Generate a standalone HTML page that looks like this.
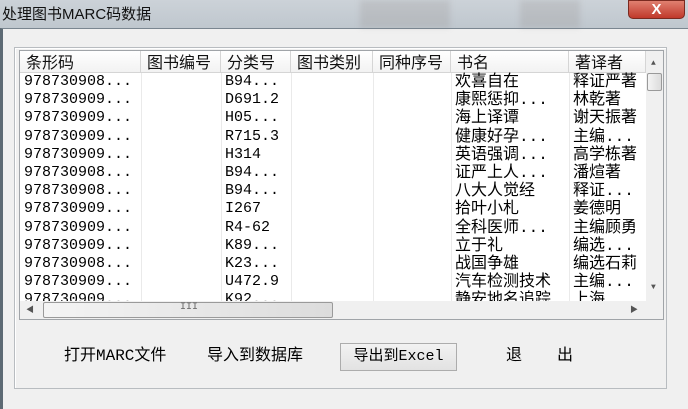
<!DOCTYPE html>
<html><head><meta charset="utf-8"><style>
*{margin:0;padding:0;box-sizing:border-box}
body{width:688px;height:409px;overflow:hidden;background:#f0f0f0;position:relative;font-family:"Liberation Mono","Noto Sans CJK SC",monospace;font-size:15px;color:#000}
.title{position:absolute;left:0;top:0;width:688px;height:28px;background:linear-gradient(#ccd2d8,#bfc7ce);}
.title span{position:absolute;left:2px;top:3px;font-family:"Liberation Sans","Noto Sans CJK SC",sans-serif;font-size:15px;color:#111}
.blur{position:absolute;top:0;height:28px;background:rgba(120,110,100,.15);filter:blur(3px)}
.close{position:absolute;left:628px;top:0;width:57px;height:19px;border-radius:0 0 5px 5px;background:linear-gradient(#e08070,#c0392b);border:1px solid #7a2a20;color:#fff;font:bold 15px "Liberation Sans",sans-serif;text-align:center;line-height:17px}
.frame{position:absolute;left:0;top:28px;width:688px;height:381px;border-left:3px solid #5d6a74;border-top:1px solid #7a8690}
.group{position:absolute;left:14px;top:47px;width:653px;height:342px;border:1px solid #b8bcc0;box-shadow:inset 1px 1px #fff}
.lv{position:absolute;left:19px;top:50px;width:645px;height:270px;background:#fff;border:1px solid #a0a4a8;overflow:hidden}
.hdr{position:absolute;left:0;top:0;height:22px;width:626px;background:linear-gradient(#fff,#f2f2f2);border-bottom:1px solid #d5d5d5;white-space:nowrap}
.hdr div{position:absolute;top:0;height:22px;border-right:1px solid #d5d5d5;padding-left:6px;line-height:21px;font-family:"Noto Sans CJK SC",sans-serif;font-size:16px;color:#111}
.row{position:absolute;left:0;height:18px;width:626px;white-space:nowrap}
.row span{position:absolute;top:0;line-height:18px;padding-left:4px}
.row span.c{font-size:16px}
.vl{position:absolute;top:22px;height:248px;border-left:1px solid #eaeaea}
.vs{position:absolute;left:626px;top:0;width:17px;height:250px;background:#f0f0f0}
.hs{position:absolute;left:0;top:250px;width:643px;height:18px;background:#f0f0f0}
.thumb{position:absolute;border:1px solid #9a9a9a;border-radius:2px;background:linear-gradient(90deg,#f4f4f4,#dcdcdc)}
.btn{position:absolute;top:343px;font-family:"Liberation Mono","Noto Sans CJK SC",monospace;font-size:16px;line-height:26px}
.b{left:340px;width:117px;height:28px;border:1px solid #acacac;background:linear-gradient(#f2f2f2,#e2e2e2);text-align:center;font-size:15px}
</style></head><body>
<div class="title"><div class="blur" style="left:360px;width:90px"></div><div class="blur" style="left:520px;width:60px"></div><span>处理图书MARC码数据</span></div>
<div class="close">X</div>
<div class="frame"></div>
<div class="group"></div>
<div class="lv">
<div class="hdr">
<div style="left:0;width:121px">条形码</div>
<div style="left:121px;width:80px">图书编号</div>
<div style="left:201px;width:70px">分类号</div>
<div style="left:271px;width:82px">图书类别</div>
<div style="left:353px;width:78px">同种序号</div>
<div style="left:431px;width:118px">书名</div>
<div style="left:549px;width:77px">著译者</div>
</div>
<div class="vl" style="left:121px"></div><div class="vl" style="left:201px"></div><div class="vl" style="left:271px"></div><div class="vl" style="left:353px"></div><div class="vl" style="left:431px"></div><div class="vl" style="left:549px"></div>
<div id="rows"></div>
<div class="vs"><div style="position:absolute;left:5px;top:8px;font-size:8px;color:#555">▲</div><div class="thumb" style="left:1px;top:22px;width:15px;height:18px"></div><div style="position:absolute;left:5px;top:232px;font-size:8px;color:#555">▼</div></div>
<div class="hs"><div style="position:absolute;left:6px;top:3px;font-size:8px;color:#555">◀</div><div class="thumb" style="left:23px;top:1px;width:290px;height:16px"></div><div style="position:absolute;left:160px;top:1px;font-size:10px;color:#666">III</div><div style="position:absolute;left:610px;top:3px;font-size:8px;color:#555">▶</div></div>
</div>
<div class="btn" style="left:64px">打开MARC文件</div>
<div class="btn" style="left:207px">导入到数据库</div>
<div class="btn b">导出到Excel</div>
<div class="btn" style="left:506px">退</div>
<div class="btn" style="left:557px">出</div>
<script>
var d=[["978730908...","B94...","欢喜自在","释证严著"],["978730909...","D691.2","康熙惩抑...","林乾著"],["978730909...","H05...","海上译谭","谢天振著"],["978730909...","R715.3","健康好孕...","主编..."],["978730909...","H314","英语强调...","高学栋著"],["978730908...","B94...","证严上人...","潘煊著"],["978730908...","B94...","八大人觉经","释证..."],["978730909...","I267","拾叶小札","姜德明"],["978730909...","R4-62","全科医师...","主编顾勇"],["978730909...","K89...","立于礼","编选..."],["978730908...","K23...","战国争雄","编选石莉"],["978730909...","U472.9","汽车检测技术","主编..."],["978730909...","K92...","静安地名追踪","上海..."]];
var h="";d.forEach(function(r,i){h+='<div class="row" style="top:'+(22+i*18.2)+'px"><span style="left:0">'+r[0]+'</span><span style="left:201px">'+r[1]+'</span><span class="c" style="left:431px">'+r[2]+'</span><span class="c" style="left:549px">'+r[3]+'</span></div>';});
document.getElementById("rows").innerHTML=h;
</script>
</body></html>
